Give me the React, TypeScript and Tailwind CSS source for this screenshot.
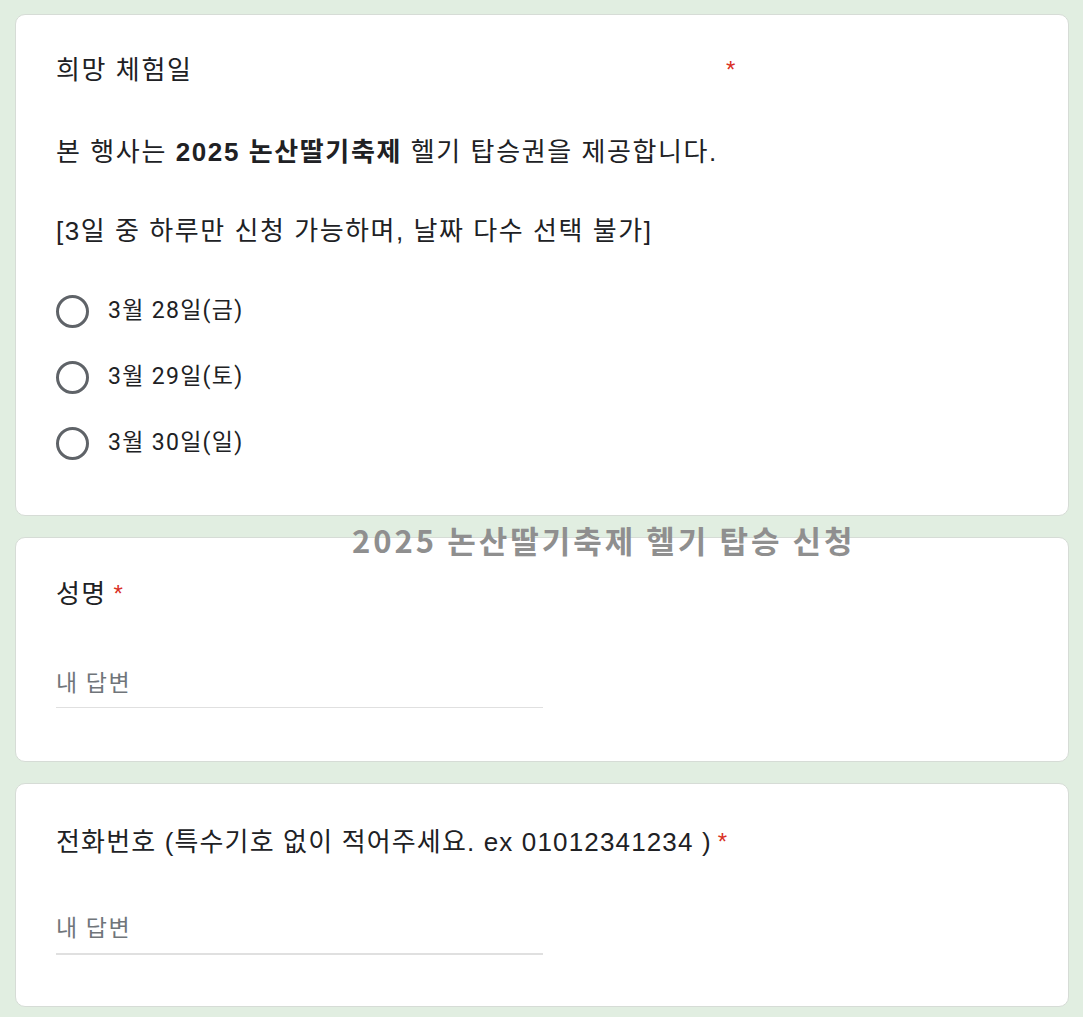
import React from "react";

const KR = "font-['Liberation_Sans','Noto_Sans_CJK_KR',sans-serif]";
const RB = "font-['Roboto','Noto_Sans_CJK_KR',sans-serif]";

function Radio({ label }: { label: string }) {
  return (
    <div className="flex h-[66px] items-center">
      <div className="h-[33px] w-[33px] shrink-0 rounded-full border-[3px] border-[#5f6368]" />
      <span className={`ml-[19px] text-[23px] leading-[32px] tracking-[1.3px] text-[#202124] ${RB}`}>{label}</span>
    </div>
  );
}

function Star({ className = "" }: { className?: string }) {
  return <span className={`text-[24px] leading-[32px] text-[#d93025] ${className}`}>*</span>;
}

function Answer({ thick }: { thick?: boolean }) {
  return (
    <div
      className={
        thick
          ? "mt-[55px] w-[487px] border-b-2 border-[#e0e0e0] pb-[8px]"
          : "mt-[58px] w-[487px] border-b border-[#e0e0e0] pb-[7px]"
      }
    >
      <div className={`text-[23px] leading-[32px] tracking-[1.5px] text-[#70757a] ${RB}`}>내 답변</div>
    </div>
  );
}

export default function App() {
  return (
    <div className={`relative min-h-[1017px] w-[1083px] bg-[#e1eee1] pl-[15px] pr-[14px] pt-[14px] ${KR}`}>
      <div className="flex flex-col gap-[21px]">
        {/* Card 1 */}
        <div className="rounded-[10px] border border-[#d6dcd6] bg-white px-[40px] pb-[39px] pt-[39px] text-[#202124]">
          <div className="flex h-[32px] items-center">
            <span className="w-[670px] text-[26px] leading-[32px] tracking-[1.6px]">희망 체험일</span>
            <Star />
          </div>
          <div className="mt-[50px] text-[26px] leading-[32px] tracking-[1.6px]">
            본 행사는 <b>2025 논산딸기축제</b> 헬기 탑승권을 제공합니다.
          </div>
          <div className="mt-[47px] text-[26px] leading-[32px] tracking-[1.55px]">
            [3일 중 하루만 신청 가능하며, 날짜 다수 선택 불가]
          </div>
          <div className="mt-[31px] flex flex-col">
            <Radio label="3월 28일(금)" />
            <Radio label="3월 29일(토)" />
            <Radio label="3월 30일(일)" />
          </div>
        </div>

        {/* Card 2 */}
        <div className="rounded-[10px] border border-[#d6dcd6] bg-white px-[40px] pb-[53px] pt-[40px] text-[#202124]">
          <div className="flex h-[32px] items-center">
            <span className="text-[26px] leading-[32px] tracking-[1.3px]">성명</span>
            <Star className="ml-[7px]" />
          </div>
          <Answer />
        </div>

        {/* Card 3 */}
        <div className="rounded-[10px] border border-[#d6dcd6] bg-white px-[40px] pb-[51px] pt-[42px] text-[#202124]">
          <div className="flex h-[32px] items-center">
            <span className="text-[26px] leading-[32px] tracking-[1.15px]">
              전화번호 (특수기호 없이 적어주세요. ex 01012341234 )
            </span>
            <Star className="ml-[6px]" />
          </div>
          <Answer thick />
        </div>
      </div>

      <div className="pointer-events-none absolute left-[352px] top-[520px] whitespace-nowrap font-['Noto_Sans_CJK_KR',sans-serif] text-[31px] font-bold leading-[40px] tracking-[3px] text-[#8f8f8f]">
        2025 논산딸기축제 헬기 탑승 신청
      </div>
    </div>
  );
}
